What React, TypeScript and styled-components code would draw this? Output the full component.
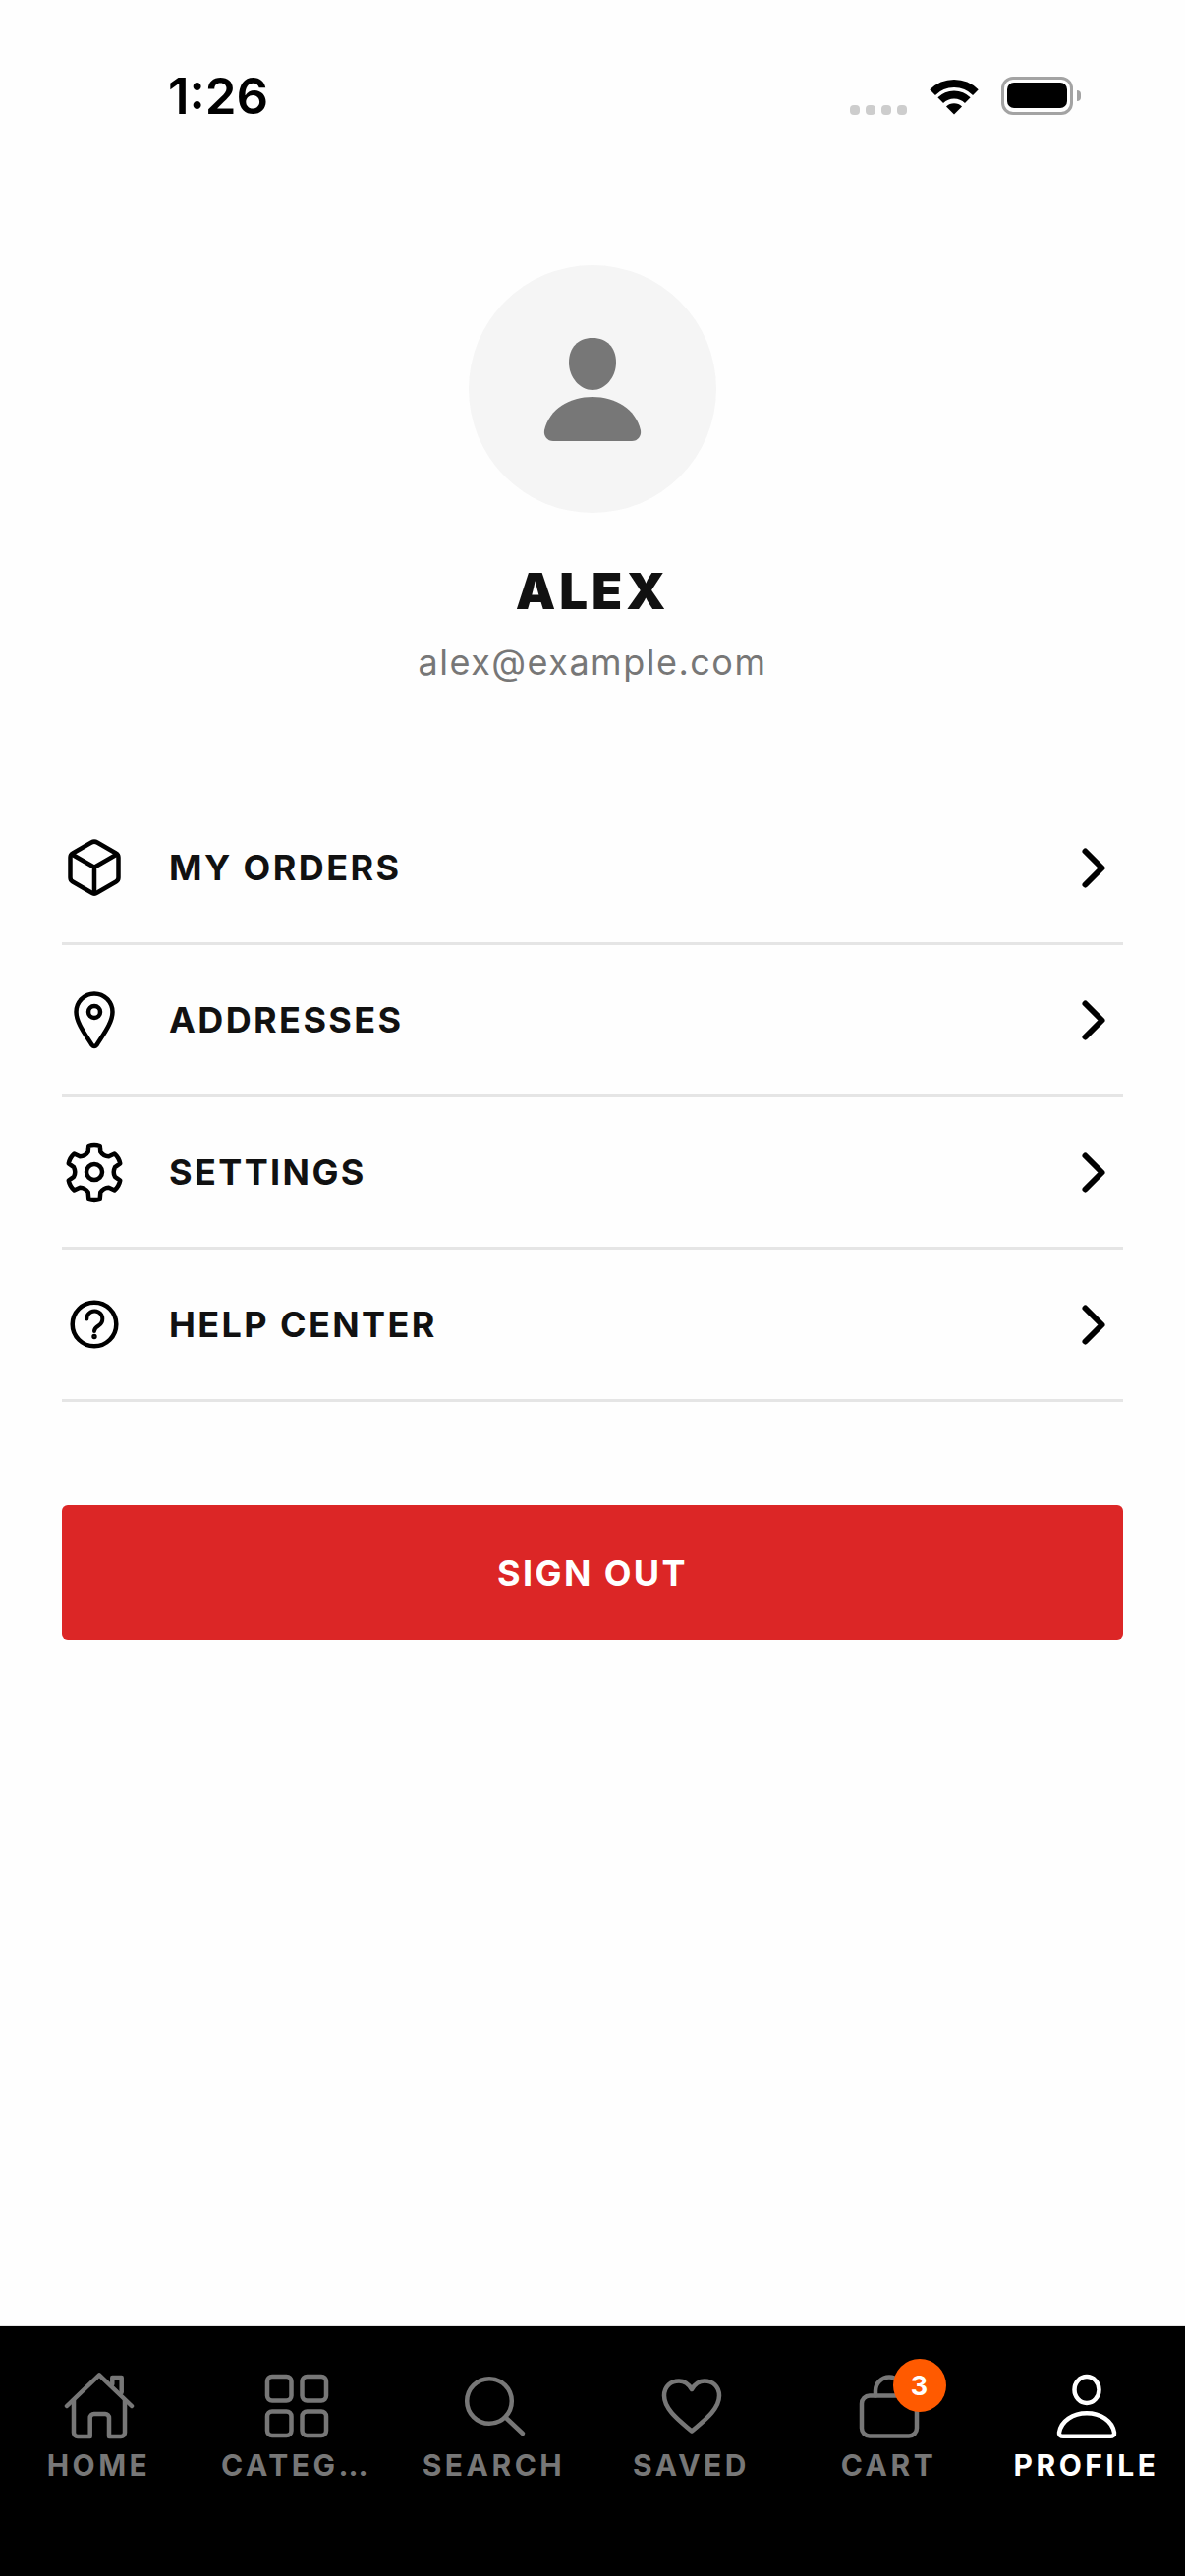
import { FC, ReactNode } from 'react'
import styled, { createGlobalStyle } from 'styled-components'

const GlobalStyle = createGlobalStyle`
  html, body {
    margin: 0;
    padding: 0;
    background: #fff;
  }
  * {
    box-sizing: border-box;
  }
`

const FONT = `Inter, "Liberation Sans", sans-serif`

const Page = styled.div`
  width: 1206px;
  height: 2622px;
  display: flex;
  flex-direction: column;
  background: #fefefe;
  font-family: ${FONT};
  overflow: hidden;
`

const StatusBar = styled.div`
  height: 270px;
  padding: 72px 114px 0 171px;
  display: flex;
  justify-content: space-between;
  align-items: flex-start;
`

const Time = styled.span`
  font-size: 51px;
  font-weight: 600;
  line-height: 51px;
  color: #000;
`

const StatusIcons = styled.div`
  display: flex;
  align-items: flex-end;
  height: 45px;
`

const SignalDots = styled.div`
  display: flex;
  gap: 6px;
  margin-right: 23px;
`

const SignalDot = styled.span`
  width: 10px;
  height: 10px;
  border-radius: 4px;
  background: #cdcdcd;
`

const WifiIcon = styled.svg`
  width: 50px;
  height: 37px;
  margin-right: 23px;
`

const Battery = styled.div`
  width: 73px;
  height: 39px;
  padding: 3px 3px 4px;
  border: 3px solid #a3a3a3;
  border-radius: 12px;
  position: relative;
  &::before {
    content: '';
    display: block;
    height: 100%;
    background: #000;
    border-radius: 7px;
  }
  &::after {
    content: '';
    position: absolute;
    right: -11px;
    top: 11px;
    width: 4px;
    height: 11px;
    border-radius: 0 4px 4px 0;
    background: #a3a3a3;
  }
`

const Header = styled.section`
  display: flex;
  flex-direction: column;
  align-items: center;
`

const Avatar = styled.div`
  width: 252px;
  height: 252px;
  border-radius: 50%;
  background: #f5f5f5;
  display: flex;
  align-items: center;
  justify-content: center;
`

const AvatarIcon = styled.svg`
  width: 98px;
  height: 105px;
  overflow: visible;
`

const Name = styled.h1`
  margin: 50px 0 0;
  font-size: 51px;
  line-height: 60px;
  font-weight: 900;
  letter-spacing: 4px;
  color: #111;
`

const Email = styled.p`
  margin: 20px 0 0;
  font-size: 36px;
  line-height: 44px;
  font-weight: 400;
  letter-spacing: 1.5px;
  color: #777;
`

const Menu = styled.nav`
  margin: 111px 63px 0;
  display: flex;
  flex-direction: column;
`

const MenuRow = styled.div`
  height: 155px;
  padding-right: 15px;
  display: flex;
  align-items: center;
  gap: 43px;
  border-bottom: 3px solid #e5e5e5;
`

const MenuIcon = styled.svg`
  width: 66px;
  height: 66px;
  flex: none;
  fill: none;
  stroke: #000;
  stroke-width: 4.5;
  stroke-linecap: round;
  stroke-linejoin: round;
`

const MenuLabel = styled.span`
  flex: 1;
  font-size: 36px;
  font-weight: 700;
  letter-spacing: 2.4px;
  color: #111;
`

const Chevron = styled.svg`
  width: 30px;
  height: 45px;
  fill: none;
  stroke: #000;
  stroke-width: 6;
  stroke-linecap: round;
  stroke-linejoin: round;
`

const SignOut = styled.button`
  margin: 105px 63px 0;
  height: 137px;
  border: 0;
  border-radius: 6px;
  background: #dc2626;
  color: #fff;
  font-family: ${FONT};
  font-size: 36px;
  font-weight: 700;
  letter-spacing: 2.4px;
`

const TabBar = styled.footer`
  margin-top: auto;
  height: 255px;
  padding-top: 45px;
  display: grid;
  grid-template-columns: repeat(6, 201px);
  background: #000;
  border-top: 1px solid #e5e5e5;
`

const Tab = styled.div<{ $active?: boolean }>`
  min-width: 0;
  display: flex;
  flex-direction: column;
  align-items: center;
  color: ${(p) => (p.$active ? '#fff' : '#777')};
`

const TabIconWrap = styled.div`
  position: relative;
  width: 72px;
  height: 72px;
`

const TabIcon = styled.svg`
  width: 72px;
  height: 72px;
  display: block;
  fill: none;
  stroke: currentColor;
  stroke-width: 4.5;
  stroke-linecap: round;
  stroke-linejoin: round;
`

const TabLabel = styled.span`
  margin-top: 6px;
  font-size: 30px;
  line-height: 36px;
  font-weight: 700;
  letter-spacing: 3.5px;
  white-space: nowrap;
`

const Badge = styled.span`
  position: absolute;
  left: 40px;
  top: -12px;
  width: 54px;
  height: 54px;
  border-radius: 50%;
  background: #ff5a00;
  color: #fff;
  font-size: 27px;
  font-weight: 700;
  display: flex;
  align-items: center;
  justify-content: center;
`

// six toothed gear, tooth pointing straight up
const gearPath = () => {
  const cx = 33
  const cy = 33
  const pt = (r: number, deg: number) => {
    const a = (deg * Math.PI) / 180
    return `${(cx + r * Math.cos(a)).toFixed(2)} ${(cy + r * Math.sin(a)).toFixed(2)}`
  }
  let d = ''
  for (let i = 0; i < 6; i++) {
    const a = -90 + i * 60
    d += `${i === 0 ? 'M' : 'L'}${pt(21.5, a - 17)} L${pt(27.6, a - 12)} Q${pt(29, a)} ${pt(27.6, a + 12)} L${pt(21.5, a + 17)} `
    d += `Q${pt(18.5, a + 30)} ${pt(21.5, a + 43)} `
  }
  return d + 'Z'
}

const menuItems: { label: string; icon: ReactNode }[] = [
  {
    label: 'MY ORDERS',
    icon: (
      <>
        <path d="M30 7.5a6 6 0 0 1 6 0L55 18.5a5 5 0 0 1 2.5 4.3V43.2a5 5 0 0 1-2.5 4.3L36 58.5a6 6 0 0 1-6 0L11 47.5a5 5 0 0 1-2.5-4.3V22.8a5 5 0 0 1 2.5-4.3Z" />
        <path d="M10 19.5 33 32.7 56 19.5M33 32.7V59.5" />
      </>
    ),
  },
  {
    label: 'ADDRESSES',
    icon: (
      <>
        <path d="M30.5 58.5C24 48 14.5 36 14.5 25a18.5 18.5 0 0 1 37 0C51.5 36 42 48 35.5 58.5Q33 61.5 30.5 58.5Z" />
        <circle cx="33" cy="25" r="6" />
      </>
    ),
  },
  {
    label: 'SETTINGS',
    icon: (
      <>
        <path d={gearPath()} />
        <circle cx="33" cy="33" r="8" />
      </>
    ),
  },
  {
    label: 'HELP CENTER',
    icon: (
      <>
        <circle cx="33" cy="33" r="22.3" />
        <path d="M25.3 27.5a8 8 0 1 1 12.2 6.8c-3 1.8-4.5 3-4.5 5.7" strokeWidth="4" />
        <circle cx="33" cy="45.5" r="1.2" strokeWidth="3" />
      </>
    ),
  },
]

const tabs: { label: string; active?: boolean; badge?: string; icon: ReactNode }[] = [
  {
    label: 'HOME',
    icon: (
      <>
        <path d="M3 36 36 4.3 69 36" />
        <path d="M49.3 13.7V7H58.7V22" />
        <path d="M10 30V63a4 4 0 0 0 4 4H26.7V48a4 4 0 0 1 4-4H42a4 4 0 0 1 4 4V67H58a4 4 0 0 0 4-4V30" />
      </>
    ),
  },
  {
    label: 'CATEG…',
    icon: (
      <>
        <rect x="6" y="6" width="24.5" height="24.5" rx="5" />
        <rect x="41.5" y="6" width="24.5" height="24.5" rx="5" />
        <rect x="6" y="41.5" width="24.5" height="24.5" rx="5" />
        <rect x="41.5" y="41.5" width="24.5" height="24.5" rx="5" />
      </>
    ),
  },
  {
    label: 'SEARCH',
    icon: (
      <>
        <circle cx="31" cy="31" r="22.8" />
        <path d="M48 48 65 64" />
      </>
    ),
  },
  {
    label: 'SAVED',
    icon: (
      <path d="M36 61.5C25 52 8 40 8 25.5 8 16 15 10.5 23 10.5 28.5 10.5 33 14 36 19 39 14 43.5 10.5 49 10.5 57 10.5 64 16 64 25.5 64 40 47 52 36 61.5Z" />
    ),
  },
  {
    label: 'CART',
    badge: '3',
    icon: (
      <>
        <rect x="8" y="25.5" width="56" height="41" rx="8" />
        <path d="M22 25.5V20.5a14 14 0 0 1 28 0V25.5" />
      </>
    ),
  },
  {
    label: 'PROFILE',
    active: true,
    icon: (
      <>
        <ellipse cx="36" cy="19.5" rx="12.5" ry="13.4" />
        <path d="M8 63C10 51 22 43.3 36 43.3 50 43.3 62 51 64 63 64.4 65.5 62.5 66.8 60 66.8H12C9.5 66.8 7.6 65.5 8 63Z" />
      </>
    ),
  },
]

const App: FC = () => {
  return (
    <Page>
      <GlobalStyle />
      <StatusBar>
        <Time>1:26</Time>
        <StatusIcons>
          <SignalDots>
            <SignalDot />
            <SignalDot />
            <SignalDot />
            <SignalDot />
          </SignalDots>
          <WifiIcon viewBox="0 0 50 37">
            <path d="M3.1 14.1a31 31 0 0 1 43.8 0" fill="none" stroke="#000" strokeWidth="8" />
            <path d="M11.2 22.2a19.5 19.5 0 0 1 27.6 0" fill="none" stroke="#000" strokeWidth="8" />
            <path d="M25 36.5 17 28.5a11.3 11.3 0 0 1 16 0Z" fill="#000" />
          </WifiIcon>
          <Battery />
        </StatusIcons>
      </StatusBar>

      <Header>
        <Avatar>
          <AvatarIcon viewBox="0 0 98 105">
            <path d="M49 0C64 0 73 10 73 25 73 40 62 53 49 53 36 53 25 40 25 25 25 10 34 0 49 0Z" fill="#777" />
            <path d="M49 60C72 60 93 72 98 94 99 100 95 105 89 105H9C3 105-1 100 0 94 5 72 26 60 49 60Z" fill="#777" />
          </AvatarIcon>
        </Avatar>
        <Name>ALEX</Name>
        <Email>alex@example.com</Email>
      </Header>

      <Menu>
        {menuItems.map((item) => (
          <MenuRow key={item.label}>
            <MenuIcon viewBox="0 0 66 66">{item.icon}</MenuIcon>
            <MenuLabel>{item.label}</MenuLabel>
            <Chevron viewBox="0 0 30 45">
              <path d="M6.5 5.5 23.5 22.5 6.5 39.5" />
            </Chevron>
          </MenuRow>
        ))}
      </Menu>

      <SignOut type="button">SIGN OUT</SignOut>

      <TabBar>
        {tabs.map((tab) => (
          <Tab key={tab.label} $active={tab.active}>
            <TabIconWrap>
              <TabIcon viewBox="0 0 72 72">{tab.icon}</TabIcon>
              {tab.badge && <Badge>{tab.badge}</Badge>}
            </TabIconWrap>
            <TabLabel>{tab.label}</TabLabel>
          </Tab>
        ))}
      </TabBar>
    </Page>
  )
}

export default App
